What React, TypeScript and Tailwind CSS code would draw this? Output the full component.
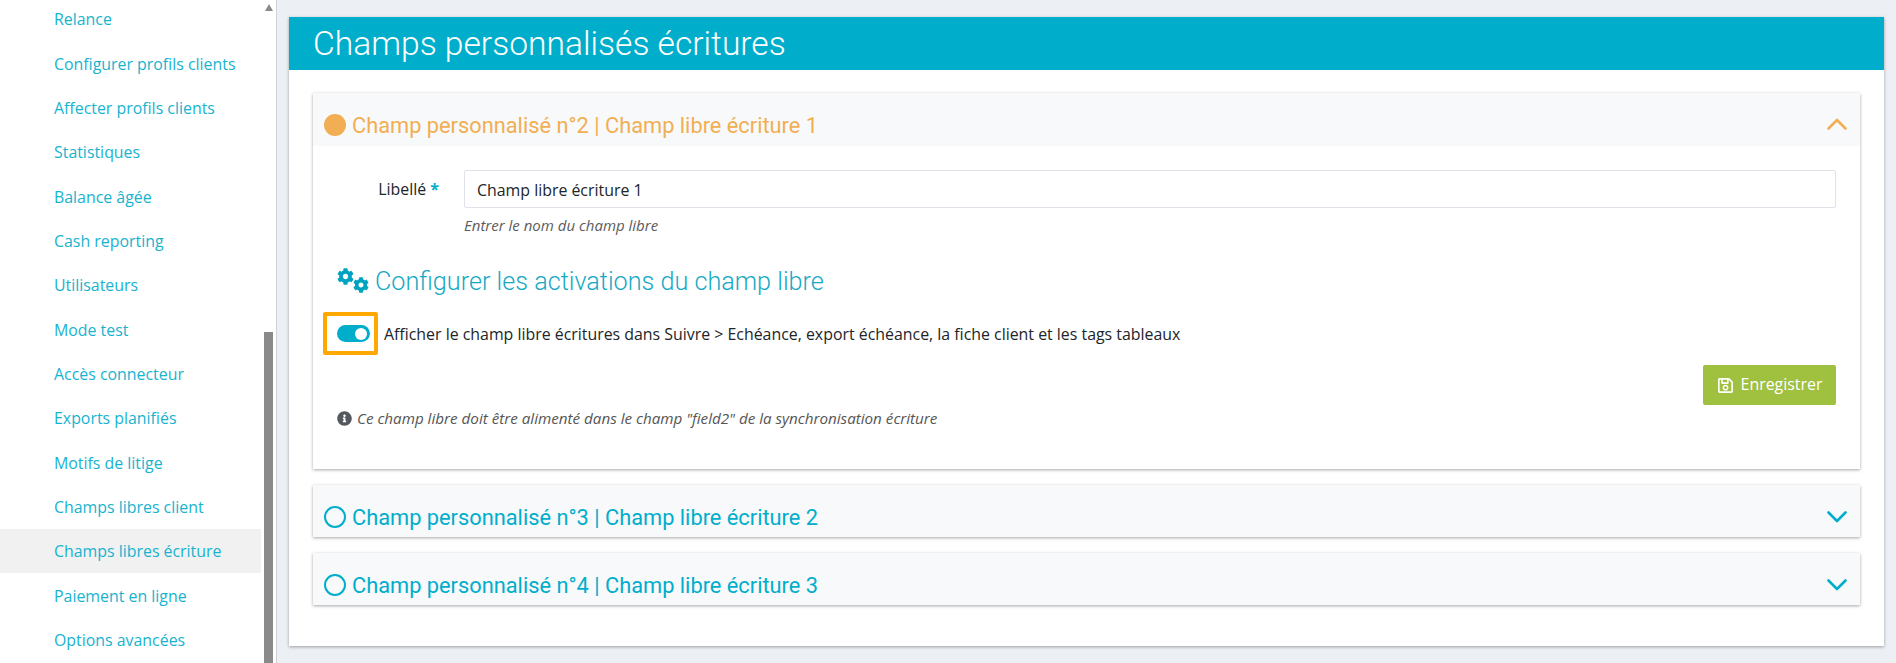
import React from 'react';
import { FaCog, FaInfoCircle, FaRegSave } from 'react-icons/fa';

// ── Data ───────────────────────────────────────────────────────────────────
const MENU = [
  'Relance',
  'Configurer profils clients',
  'Affecter profils clients',
  'Statistiques',
  'Balance âgée',
  'Cash reporting',
  'Utilisateurs',
  'Mode test',
  'Accès connecteur',
  'Exports planifiés',
  'Motifs de litige',
  'Champs libres client',
  'Champs libres écriture',
  'Paiement en ligne',
  'Options avancées',
];

const OPEN_SANS = "font-['Open_Sans','Noto_Sans',sans-serif]";

const Chevron: React.FC<{ up?: boolean }> = ({ up }) => (
  <svg width="20" height="12" viewBox="0 0 20 12" fill="none" stroke="currentColor" strokeWidth="2.6" strokeLinecap="round" strokeLinejoin="round">
    <path d={up ? 'M1.5 10.5 L10 2 L18.5 10.5' : 'M1.5 1.5 L10 10 L18.5 1.5'} />
  </svg>
);

// ── Sidebar ────────────────────────────────────────────────────────────────
const Sidebar: React.FC = () => (
  <aside className="relative h-[663px] w-[277px] shrink-0 overflow-hidden border-r border-[#cfd2d8] bg-white">
    <ul className={`-mt-[3px] w-[261px] text-[15.9px] text-[#17b3cf] ${OPEN_SANS}`}>
      {MENU.map((item) => (
        <li
          key={item}
          className={`flex h-[44.33px] items-center pl-[54px] pt-[2px] ${item === 'Champs libres écriture' ? 'bg-[#f1f1f1]' : ''}`}
        >
          {item}
        </li>
      ))}
    </ul>
    {/* barre de défilement */}
    <div className="absolute right-[3px] top-0 flex h-full w-[9px] flex-col items-center">
      <div className="mt-[4px] h-0 w-0 border-x-[4.5px] border-b-[7px] border-x-transparent border-b-[#8a8a8a]" />
      <div className="mt-[321px] w-full flex-1 bg-[#8a8a8a]" />
    </div>
  </aside>
);

// ── Accordéon fermé ────────────────────────────────────────────────────────
const ClosedPanel: React.FC<{ title: string }> = ({ title }) => (
  <div className="mt-4 flex h-[52px] items-center justify-between bg-[#f8f9fb] pl-[11px] pr-[13px] pt-[12px] text-[#00aecb] shadow-[0_1px_3px_rgba(0,0,0,0.35)]">
    <div className="flex items-center gap-[6px]">
      <span className="h-[22px] w-[22px] rounded-full border-2 border-[#00aecb]" />
      <span className="pt-[2px] text-[21.8px] font-['Roboto',sans-serif]">{title}</span>
    </div>
    <Chevron />
  </div>
);

// ── Page ───────────────────────────────────────────────────────────────────
const App: React.FC = () => (
  <div className="flex h-[663px] w-[1896px] overflow-hidden bg-[#eceff4]">
    <Sidebar />
    <main className="flex-1 pl-3 pr-3 pt-[17px]">
      <section className="h-[629px] bg-white shadow-[0_1px_3px_rgba(0,0,0,0.35)]">
        <h1 className="flex h-[53px] items-center bg-[#00aecb] pl-6 pt-[2px] text-[33.6px] font-light text-white font-['Roboto',sans-serif]">
          Champs personnalisés écritures
        </h1>

        <div className="px-6 pt-[23px]">
          {/* Accordéon ouvert */}
          <div className="h-[376px] bg-white shadow-[0_1px_3px_rgba(0,0,0,0.35)]">
            <div className="flex h-[53px] items-center justify-between bg-[#f8f9fb] pl-[11px] pr-[13px] pt-[11px] text-[#f2ae52]">
              <div className="flex items-center gap-[6px]">
                <span className="h-[22px] w-[22px] rounded-full bg-[#f2ae52]" />
                <span className="pt-[2px] text-[21.8px] font-['Roboto',sans-serif]">Champ personnalisé n°2 | Champ libre écriture 1</span>
              </div>
              <span className="-mt-[3px]"><Chevron up /></span>
            </div>

            <div className={`pl-6 pr-[24px] text-[15.9px] text-[#212529] ${OPEN_SANS}`}>
              <div className="mt-6 flex items-center">
                <label className="w-[127px] pr-[25px] pt-[2px] text-right">
                  Libellé <span className="font-bold text-[#00aecb]">*</span>
                </label>
                <input
                  readOnly
                  value="Champ libre écriture 1"
                  className="h-[38px] flex-1 rounded-[2px] border border-[#dfe2e8] bg-white px-[12px] pt-[1px] text-[15.9px] text-[#212529] outline-none"
                />
              </div>
              <p className="mt-[7px] pl-[127px] text-[15px] italic leading-[20px] text-[#5c5c5c]">Entrer le nom du champ libre</p>

              <h2 className="mt-[31px] flex h-[32px] items-center gap-[6px] text-[25.2px] font-light text-[#17a9c4] font-['Roboto',sans-serif]">
                <span className="-mt-[4px] flex w-[32px] text-[#00a3bf]">
                  <FaCog className="h-[17px] w-[17px] shrink-0" />
                  <FaCog className="-ml-[1px] mt-[9px] h-[16px] w-[16px] shrink-0" />
                </span>
                Configurer les activations du champ libre
              </h2>

              <div className="mt-[14px] flex items-center">
                <span className="relative -ml-[14px] flex h-[43px] w-[55px] items-center rounded-[2px] border-4 border-[#ffa800] pl-[10px]">
                  <span className="flex h-[17px] w-[33px] items-center justify-end rounded-full bg-[#00aecb] pr-[3px]">
                    <span className="h-[12px] w-[12px] rounded-full bg-white" />
                  </span>
                </span>
                <span className="ml-[6px] pt-[2px]">Afficher le champ libre écritures dans Suivre &gt; Echéance, export échéance, la fiche client et les tags tableaux</span>
              </div>

              <div className="mt-[10px] flex justify-end">
                <button className="flex h-[40px] w-[133px] items-center justify-center gap-[7px] rounded-[2px] bg-[#a0c03f] text-[15.9px] text-white">
                  <FaRegSave className="h-[17px] w-[17px]" />
                  Enregistrer
                </button>
              </div>

              <div className="mt-[2px] flex items-center gap-[5px] text-[15.2px] italic text-[#555]">
                <FaInfoCircle className="h-[15px] w-[15px] text-[#55595f]" />
                Ce champ libre doit être alimenté dans le champ "field2" de la synchronisation écriture
              </div>
            </div>
          </div>

          <ClosedPanel title="Champ personnalisé n°3 | Champ libre écriture 2" />
          <ClosedPanel title="Champ personnalisé n°4 | Champ libre écriture 3" />
        </div>
      </section>
    </main>
  </div>
);

export default App;
